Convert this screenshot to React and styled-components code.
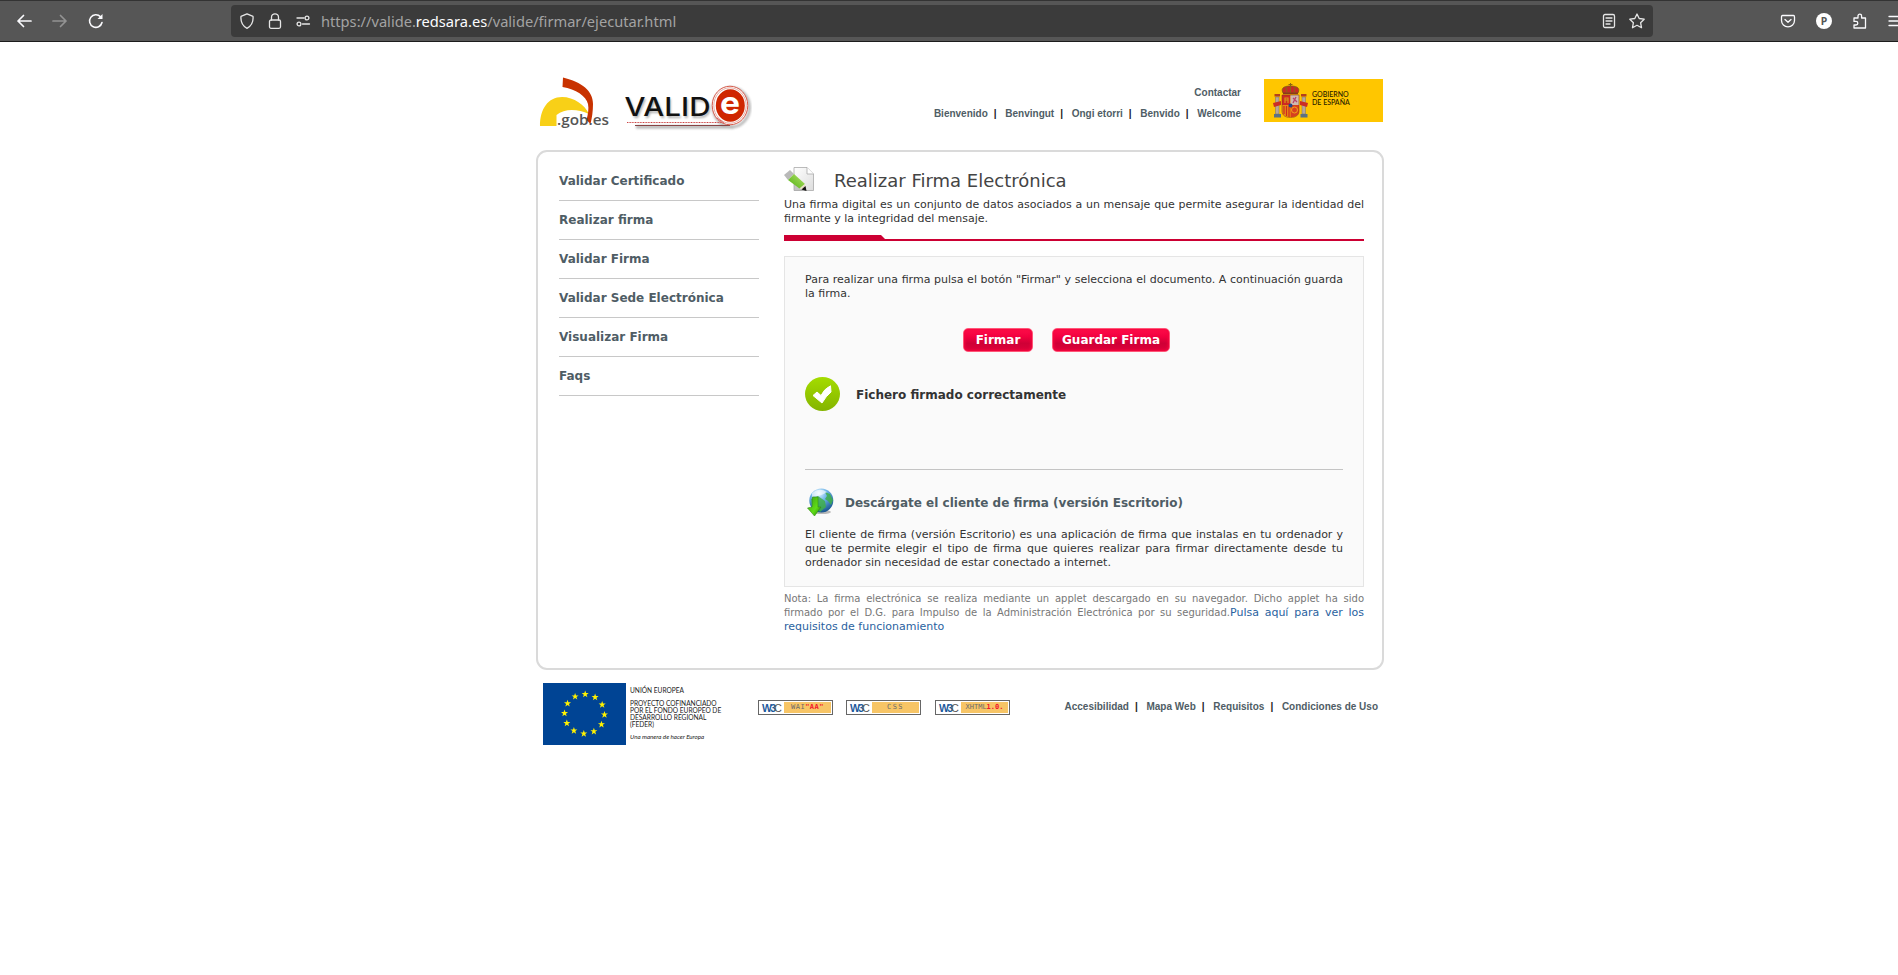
import React from "react";
import styled, { createGlobalStyle } from "styled-components";

const Global = createGlobalStyle`
  * { box-sizing: border-box; }
  body { margin: 0; background: #fff; overflow: hidden; font-family: "DejaVu Sans", sans-serif; color: #333; }
  p, h1, h2, ul { margin: 0; padding: 0; font-weight: normal; }
  svg { display: block; flex: none; }
  a { color: inherit; text-decoration: none; }
`;

const Toolbar = styled.header`
  height: 42px; width: 1898px; overflow: hidden; background: #565656;
  border-top: 1px solid #333; border-bottom: 1px solid #1c1c1c;
  display: flex; align-items: center;
`;
const NavIcons = styled.div`flex: none; display: flex; gap: 20px; padding-left: 16px; width: 231px; color: #fbfbfe;`;
const UrlBar = styled.div`
  flex: none; width: 1422px; height: 32px; border-radius: 4px; background: #3b3b3b; color: #e6e6e6;
  display: flex; align-items: center; padding: 0 8px;
`;
const UrlIcons = styled.div`display: flex; gap: 12px; width: 82px;`;
const UrlText = styled.div`
  flex: 1; padding-left: 0; font: 14.65px/20px "Noto Sans", sans-serif; color: #a3a3a3; white-space: nowrap;
  b { font-weight: 400; color: #fbfbfe; }
`;
const PageActions = styled.div`display: flex; gap: 12px;`;
const ToolIcons = styled.div`flex: none; display: flex; gap: 20px; padding-left: 127px; color: #fbfbfe;`;

const Page = styled.div`width: 848px; margin: 0 0 0 536px;`;
const Head = styled.div`height: 108px; display: flex; align-items: flex-start;`;
const Logos = styled.div`padding-top: 34px;`;
const HeadLinks = styled.div`
  margin-left: auto; margin-right: 23px; padding-top: 44px;
  display: flex; flex-direction: column; align-items: flex-end; gap: 7px;
`;
const Links = styled.div`
  display: flex; white-space: nowrap; font: bold 10px/14px "Liberation Sans", sans-serif; color: #4f5d65;
`;
const Sep = styled.span`color: #222; margin: 0 8.7px 0 6px;`;
const Government = styled.div`
  width: 119px; height: 43px; margin: 37px 1px 0 0; padding: 4px 0 0 9px; background: #ffc600; display: flex;
`;
const GovernmentName = styled.div`
  margin: 8px 0 0 4px; font: 7px/7.6px Lato, sans-serif; font-weight: 500; color: #1d1800; white-space: nowrap;
`;

const Panel = styled.main`
  height: 520px; border: 2px solid #dadada; border-radius: 11px; display: flex; padding: 0 18px 0 21px;
`;
const Menu = styled.ul`width: 200px; list-style: none; padding-top: 10px;`;
const MenuItem = styled.li`
  height: 39px; padding-top: 11px; border-bottom: 1px solid #c8c8c8;
  font-size: 12px; line-height: 16px; font-weight: bold; color: #4f5d65;
`;
const Content = styled.section`width: 580px; margin-left: 25px; padding-top: 14px;`;
const Title = styled.div`display: flex; height: 32px; gap: 19px; padding-top: 1px;`;
const TitleText = styled.h1`font-size: 18px; line-height: 22px; padding-top: 3px; color: #444; white-space: nowrap;`;
const Text = styled.p`font-size: 11px; line-height: 14px; text-align: justify; color: #333;`;
const Rule = styled.div`
  height: 6px; margin: 9px 0 15px; border-bottom: 2px solid #cc0033;
`;
const RuleTab = styled.div`
  width: 101px; height: 4px; background: #cc0033; clip-path: polygon(0 0, 97px 0, 100% 100%, 0 100%);
`;
const Box = styled.div`
  height: 331px; background: #fafafa; border: 1px solid #e5e5e5; padding: 16px 20px 0;
`;
const Buttons = styled.div`display: flex; gap: 19px; margin: 27px 0 25px 158px;`;
const Button = styled.button`
  width: ${(p) => p.$w}px; height: 24px; padding: 0 0 1px; border: 1px solid #ff5577; border-radius: 5px;
  background: linear-gradient(#ff0f4b, #f2003f 35%, #cf0036 65%, #dd003a);
  box-shadow: inset 0 0 3px 1px #f5063f;
  font: bold 12px/20px "DejaVu Sans", sans-serif; color: #fff; white-space: nowrap;
`;
const Status = styled.div`
  display: flex; align-items: center; gap: 16px; height: 35px; font-size: 12px; font-weight: bold; color: #333;
`;
const Download = styled.div`
  margin-top: 57px; border-top: 1px solid #c4c4c4; padding-top: 17px; height: 59px;
  display: flex; gap: 11px;
`;
const DownloadTitle = styled.h2`
  font-size: 12px; font-weight: bold; line-height: 16px; padding-top: 8px; color: #4f5d65;
`;
const Note = styled.p`
  margin-top: 5px; font-size: 10px; line-height: 14px; text-align: justify; color: #777;
  a { font-size: 11px; line-height: 14px; color: #2a62a0; }
`;

const Foot = styled.footer`display: flex; padding: 13px 6px 0 7px; height: 90px;`;
const Funding = styled.div`
  width: 132px; padding: 4px 0 0 4px; font: 6.6px/7px Lato, sans-serif; font-weight: 500; color: #222; white-space: nowrap;
  p + p { margin-top: 6px; }
  p:last-child { margin-top: 5px; }
  em { font-size: 6.2px; }
`;
const Badges = styled.div`display: flex; padding-top: 17px;`;
const Badge = styled.div`
  width: 75px; height: 15px; border: 1px solid #666; display: flex; padding: 1px;
  margin-right: ${(p) => p.$gap}px;
`;
const BadgeMark = styled.div`
  width: 24px; font: bold 10.5px/12px "Liberation Sans", sans-serif; letter-spacing: -1.7px; color: #1d5a9c; padding-left: 2px;
  span { color: #555; font-weight: 400; }
`;
const BadgeText = styled.div`
  flex: 1; background: #f7c566; color: #6b6b6b; text-align: center;
  font: 7px/11px "DejaVu Sans Mono", monospace; letter-spacing: ${(p) => p.$spacing || 0}px; white-space: nowrap;
  b { color: #f3122b; }
`;
const FootLinks = styled.div`margin-left: auto; padding-top: 17px;`;

const Icon = ({ children, w = 16 }) => (
  <svg width={w} height={w} viewBox="0 0 16 16" fill="none" stroke="currentColor" strokeWidth="1.3" strokeLinecap="round" strokeLinejoin="round">{children}</svg>
);

const SiteLogos = () => (
  <svg width="216" height="60" viewBox="0 0 216 60">
    <defs>
      <filter id="soft" x="-10%" y="-20%" width="120%" height="150%"><feGaussianBlur stdDeviation="1" /></filter>
    </defs>
    <path d="M4 50C4 33 12 21 26 21C38 21 49 29 53 38C42 33 29 32 20.500 39V50Z" fill="#f8d017" />
    <path d="M27 1.500C46 6 57 15 57 28C57 35 56 42 54.500 48L50.500 44C52 38 53 33 52 28C50 20 40 13 26.500 11Z" fill="#c83200" />
    <text x="21" y="48.800" fontFamily="Open Sans, sans-serif" fontSize="14.5" fontWeight="600" fill="#555" textLength="52" lengthAdjust="spacingAndGlyphs">.gob.es</text>
    <g filter="url(#soft)" opacity=".4">
      <ellipse cx="195.500" cy="31.500" rx="18" ry="19.500" fill="none" stroke="#555" strokeWidth="3" />
      <path d="M100 51H198" stroke="#444" strokeWidth="3" />
      <text x="90" y="41.500" fontFamily="Inter, sans-serif" fontSize="26" textLength="86" lengthAdjust="spacingAndGlyphs" fill="#333">VALID</text>
    </g>
    <path d="M91 46.500H187" stroke="#c44" strokeWidth="1" strokeDasharray="1 .6" />
    <path d="M99 49.500H194" stroke="#844" strokeWidth="1" />
    <ellipse cx="194" cy="29.500" rx="17.800" ry="19.300" fill="#fff" stroke="#d75a4a" strokeWidth="1" />
    <ellipse cx="194" cy="29.500" rx="16.200" ry="17.700" fill="#fff" stroke="#d98a80" strokeWidth=".7" />
    <path d="M181 42L188 47" stroke="#c44" strokeWidth=".8" />
    <ellipse cx="194.300" cy="29.500" rx="14.500" ry="16.300" fill="#cf2600" />
    <text x="88.500" y="39.700" fontFamily="Inter, sans-serif" fontSize="26" fontWeight="500" textLength="86" lengthAdjust="spacingAndGlyphs" fill="#111">VALID</text>
    <text x="184" y="38" fontFamily="Inter, sans-serif" fontWeight="700" fontSize="31" textLength="20" lengthAdjust="spacingAndGlyphs" fill="#fff">e</text>
  </svg>
);

const CoatOfArms = () => (
  <svg width="35" height="36" viewBox="0 0 35 36">
    <path d="M10 10C7 4 13 3 17.500 3C22 3 28 4 25 10Z" fill="#c62b25" stroke="#7d5b16" strokeWidth=".8" />
    <path d="M17.500 0V10M15.500 1.500H19.500M13 4L14 10M22 4L21 10" stroke="#8b6514" strokeWidth="1" />
    <path d="M10 10.500H25" stroke="#8a3a1a" strokeWidth="1.6" />
    <path d="M9 12H17.500V22H9Z" fill="#cf2a22" />
    <path d="M17.500 12H26V22H17.500Z" fill="#cfb9b0" />
    <path d="M9 22H17.500V34C12 34 9 32 9 28Z" fill="#e88c12" />
    <path d="M17.500 22H26V28C26 32 23 34 17.500 34Z" fill="#d8401f" />
    <path d="M11 23V31M13.500 23V33M16 23V34" stroke="#cf2a22" strokeWidth="1.2" />
    <path d="M12 20V15H15V20M12 17H15" stroke="#d59a19" strokeWidth="1.2" fill="none" />
    <path d="M20 20L23 14M20 15L24 19" stroke="#b8436b" strokeWidth="1.3" />
    <circle cx="21.500" cy="27" r="3" fill="none" stroke="#efa21a" strokeWidth="1" />
    <circle cx="17.500" cy="22.500" r="2" fill="#21468b" />
    <path d="M9 12H26V28C26 32 23 34.500 17.500 34.500C12 34.500 9 32 9 28Z" fill="none" stroke="#8f3a1d" strokeWidth=".6" />
    <path d="M2.500 14H6V31H2.500ZM29 14H32.500V31H29Z" fill="#b9a79a" stroke="#77705e" strokeWidth=".5" />
    <path d="M1 31H8V34.500H1ZM27.500 31H34.500V34.500H27.500Z" fill="#5c7183" />
    <path d="M1.500 11H7V13.500H1.500ZM28 11H33.500V13.500H28Z" fill="#b5401b" />
    <path d="M0 20L8 18V22L1 24M35 20L27 18V22L34 24" fill="#cc2d24" />
  </svg>
);

const PencilIcon = () => (
  <svg width="31" height="25" viewBox="0 0 31 25">
    <defs><linearGradient id="paper" x2="1" y2="1"><stop stopColor="#fff" /><stop offset="1" stopColor="#ddd" /></linearGradient>
      <linearGradient id="wood" x1="1" y1="0" x2="0" y2="1"><stop stopColor="#b5e46c" /><stop offset="1" stopColor="#4fae10" /></linearGradient></defs>
    <path d="M10 .5H23L29.500 7V23.500H10Z" fill="url(#paper)" stroke="#aaa" strokeWidth=".8" />
    <path d="M23 .5V7H29.500" fill="#fff" stroke="#aaa" strokeWidth=".8" />
    <path d="M10 14L20 23.500H10Z" fill="#999" opacity=".5" />
    <path d="M0 8L6 3L10 7L4 13Z" fill="#b9b9b9" />
    <path d="M4 13L10 7L21 17L15.500 21.500Z" fill="url(#wood)" />
    <path d="M15.500 21.500L21 17L22 23.500Z" fill="#e8dfc4" />
    <path d="M17.500 22.500L21.500 19L22.500 24Z" fill="#111" />
  </svg>
);

const CheckIcon = () => (
  <svg width="35" height="35" viewBox="0 0 35 35">
    <defs><linearGradient id="lime" x2="0" y2="1"><stop stopColor="#a4dc00" /><stop offset="1" stopColor="#84b400" /></linearGradient></defs>
    <ellipse cx="17.500" cy="17" rx="17.500" ry="17" fill="url(#lime)" />
    <path d="M8 18.500L12 15L16 18.500Q19 12 25.500 8.800L26 15Q21 19 17 26Z" fill="#fff" stroke="#fff" strokeLinejoin="round" />
  </svg>
);

const GlobeIcon = () => (
  <svg width="29" height="31" viewBox="0 0 29 31">
    <defs><radialGradient id="sea" cx=".4" cy=".2" r=".85"><stop stopColor="#e4f5ff" /><stop offset=".4" stopColor="#6eb4e8" /><stop offset="1" stopColor="#0f4c86" /></radialGradient>
      <linearGradient id="down" x2="1" y2="1"><stop stopColor="#3c9d12" /><stop offset=".6" stopColor="#5fdd16" /><stop offset="1" stopColor="#207d08" /></linearGradient></defs>
    <ellipse cx="17" cy="25" rx="9" ry="2" fill="#555" opacity=".4" />
    <circle cx="16.300" cy="13.500" r="12" fill="url(#sea)" />
    <path d="M20 5L25 7L28 13L26 18L23 14L20 12L22 9ZM6 12L13 9L20 14L21 20L15 25L12 20L7 18Z" fill="#3fae49" opacity=".85" />
    <path d="M7 6Q14 0 22 5Q17 9 7 10Z" fill="#fff" opacity=".6" />
    <path d="M7.500 10H13V20H16L9.500 29L2.500 21L7 20Z" fill="url(#down)" stroke="#338e12" strokeWidth=".6" />
  </svg>
);

const starPath = "M0 -3.700L.9 -1.200L3.500 -1.200L1.400 .4L2.200 3L0 1.500L-2.200 3L-1.400 .4L-3.500 -1.200L-.9 -1.200Z";
const EuFlag = () => (
  <svg width="83" height="62" viewBox="0 0 83 62">
    <path d="M0 0H83V62H0Z" fill="#004494" />
    {Array.from({ length: 12 }, (_, i) => {
      const a = ((i * 30 + 2) * Math.PI) / 180;
      return <path key={i} d={starPath} fill="#fff200" transform={`translate(${41.5 + 20 * Math.sin(a)} ${31 - 19.7 * Math.cos(a)})`} />;
    })}
  </svg>
);

const LinkRow = ({ items }) => (
  <Links>
    {items.map((t, i) => (
      <React.Fragment key={t}>{i > 0 && <Sep>|</Sep>}<a href="#">{t}</a></React.Fragment>
    ))}
  </Links>
);

const menu = ["Validar Certificado", "Realizar firma", "Validar Firma", "Validar Sede Electrónica", "Visualizar Firma", "Faqs"];

export default function App() {
  return (
    <>
      <Global />
      <Toolbar>
        <NavIcons>
          <Icon><path strokeWidth="1.700" d="M15 8H2M7.500 2.500L2 8L7.500 13.500" /></Icon>
          <Icon><path stroke="#939393" strokeWidth="1.700" d="M1 8H14M8.500 2.500L14 8L8.500 13.500" /></Icon>
          <Icon><path strokeWidth="1.600" d="M14 9.500A6.300 6.300 0 1 1 12.500 3.800" /><path d="M14.500 1V6H9.500Z" fill="currentColor" stroke="none" /></Icon>
        </NavIcons>
        <UrlBar>
          <UrlIcons>
            <Icon><path d="M8 .8L14 3.300C14.500 8.500 12.500 13 8 15.300C3.500 13 1.500 8.500 2 3.300Z" /></Icon>
            <Icon><rect x="2.500" y="7" width="11" height="8.300" rx="1.500" /><path d="M4.500 7V4.300a3.500 3.500 0 0 1 7 0V7" /></Icon>
            <Icon><path d="M2 5H9M7.500 11H14.500" /><circle cx="12" cy="5" r="1.900" /><circle cx="4" cy="11" r="1.900" /></Icon>
          </UrlIcons>
          <UrlText>https://valide.<b>redsara.es</b>/valide/firmar/ejecutar.html</UrlText>
          <PageActions>
            <Icon><rect x="2.500" y="1.500" width="11" height="13" rx="1.500" /><path d="M5 5H11M5 8H11M5 11H9" /></Icon>
            <Icon><path d="M8 1L10.200 5.500L15.200 6.200L11.600 9.700L12.500 14.700L8 12.300L3.500 14.700L4.400 9.700L.8 6.200L5.800 5.500Z" /></Icon>
          </PageActions>
        </UrlBar>
        <ToolIcons>
          <Icon><path d="M2.500 2.500H13.500Q14.500 2.500 14.500 4V7.500A6.500 6.300 0 0 1 1.500 7.500V4Q1.500 2.500 2.500 2.500ZM5 6.500L8 9.300L11 6.500" /></Icon>
          <Icon><circle cx="8" cy="8" r="8" fill="#fff" stroke="none" /><text x="8" y="11.800" textAnchor="middle" fontSize="10.5" fontWeight="700" fontFamily="Noto Sans, sans-serif" fill="#565656" stroke="none">P</text></Icon>
          <Icon><path d="M2 5H6V3A1.800 1.800 0 0 1 9.600 3V5H13.500V15H2V12H4A1.800 1.800 0 0 0 4 8.400H2Z" /></Icon>
          <Icon><path d="M1 3.500H16M1 8H16M1 12.500H16" /></Icon>
        </ToolIcons>
      </Toolbar>
      <Page>
        <Head>
          <Logos><SiteLogos /></Logos>
          <HeadLinks>
            <LinkRow items={["Contactar"]} />
            <LinkRow items={["Bienvenido", "Benvingut", "Ongi etorri", "Benvido", "Welcome"]} />
          </HeadLinks>
          <Government><CoatOfArms /><GovernmentName>GOBIERNO<br />DE ESPAÑA</GovernmentName></Government>
        </Head>
        <Panel>
          <Menu>{menu.map((m) => <MenuItem key={m}>{m}</MenuItem>)}</Menu>
          <Content>
            <Title><PencilIcon /><TitleText>Realizar Firma Electrónica</TitleText></Title>
            <Text>Una firma digital es un conjunto de datos asociados a un mensaje que permite asegurar la identidad del firmante y la integridad del mensaje.</Text>
            <Rule><RuleTab /></Rule>
            <Box>
              <Text>Para realizar una firma pulsa el botón "Firmar" y selecciona el documento. A continuación guarda la firma.</Text>
              <Buttons><Button $w={70}>Firmar</Button><Button $w={118}>Guardar Firma</Button></Buttons>
              <Status><CheckIcon />Fichero firmado correctamente</Status>
              <Download><GlobeIcon /><DownloadTitle>Descárgate el cliente de firma (versión Escritorio)</DownloadTitle></Download>
              <Text>El cliente de firma (versión Escritorio) es una aplicación de firma que instalas en tu ordenador y que te permite elegir el tipo de firma que quieres realizar para firmar directamente desde tu ordenador sin necesidad de estar conectado a internet.</Text>
            </Box>
            <Note>Nota: La firma electrónica se realiza mediante un applet descargado en su navegador. Dicho applet ha sido firmado por el D.G. para Impulso de la Administración Electrónica por su seguridad.<a href="#">Pulsa aquí para ver los requisitos de funcionamiento</a></Note>
          </Content>
        </Panel>
        <Foot>
          <EuFlag />
          <Funding>
            <p>UNIÓN EUROPEA</p>
            <p>PROYECTO COFINANCIADO<br />POR EL FONDO EUROPEO DE<br />DESARROLLO REGIONAL<br />(FEDER)</p>
            <p><em>Una manera de hacer Europa</em></p>
          </Funding>
          <Badges>
            <Badge $gap={13}><BadgeMark>W3<span>C</span></BadgeMark><BadgeText $spacing={0.5}>WAI<b>"AA"</b></BadgeText></Badge>
            <Badge $gap={14}><BadgeMark>W3<span>C</span></BadgeMark><BadgeText $spacing={1.5}>CSS</BadgeText></Badge>
            <Badge $gap={0}><BadgeMark>W3<span>C</span></BadgeMark><BadgeText>XHTML<b>1.0.</b></BadgeText></Badge>
          </Badges>
          <FootLinks><LinkRow items={["Accesibilidad", "Mapa Web", "Requisitos", "Condiciones de Uso"]} /></FootLinks>
        </Foot>
      </Page>
    </>
  );
}
